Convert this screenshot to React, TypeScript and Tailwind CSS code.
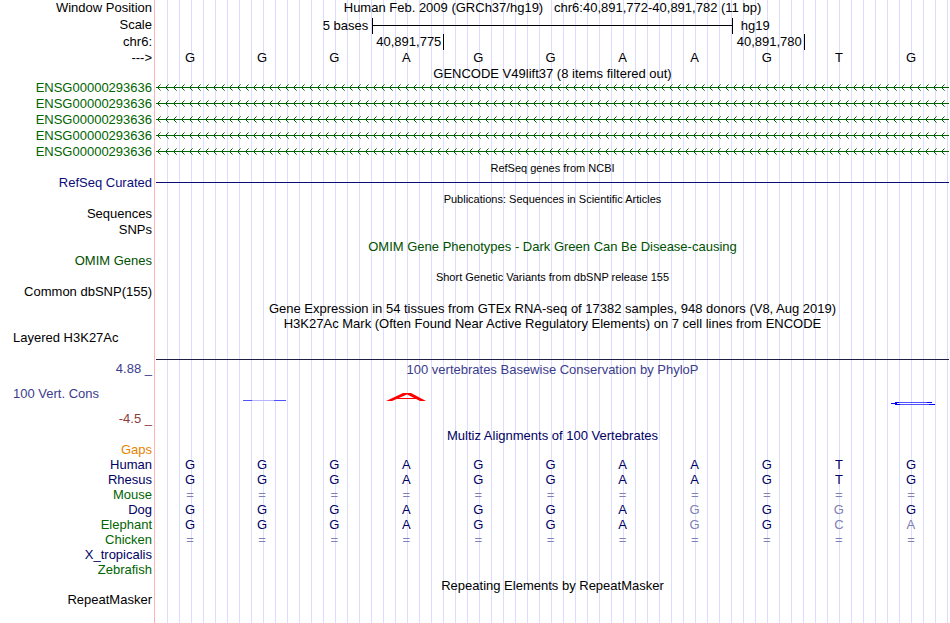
import type { ReactNode } from 'react';

const GENES = ['ENSG00000293636', 'ENSG00000293636', 'ENSG00000293636', 'ENSG00000293636', 'ENSG00000293636'];

const ALIGNMENTS = [
  { species: 'Human', color: 'text-[#000064]', bases: 'GGGAGGAAGTG' },
  { species: 'Rhesus', color: 'text-[#000064]', bases: 'GGGAGGAAGTG' },
  { species: 'Mouse', color: 'text-[#006400]', bases: '===========' },
  { species: 'Dog', color: 'text-[#000064]', bases: 'GGGAGGAGGGG' },
  { species: 'Elephant', color: 'text-[#006400]', bases: 'GGGAGGAGGCA' },
  { species: 'Chicken', color: 'text-[#006400]', bases: '===========' },
  { species: 'X_tropicalis', color: 'text-[#000064]', bases: '' },
  { species: 'Zebrafish', color: 'text-[#006400]', bases: '' },
];

const REFERENCE = 'GGGAGGAAGTG';

type RowProps = {
  label?: ReactNode;
  labelClass?: string;
  className?: string;
  children?: ReactNode;
};

/** One browser line: right-aligned label on the left, track with 12px guide lines on the right. */
function Row({ label, labelClass = '', className = 'h-4', children }: RowProps) {
  return (
    <div className={`flex ${className}`}>
      <div className={`flex w-[154px] shrink-0 items-center justify-end pr-0.5 pb-0.5 ${labelClass}`}>{label}</div>
      <div className="flex min-w-0 flex-1 flex-col justify-center border-l border-[#ffb4b4] bg-[repeating-linear-gradient(to_right,transparent_0_11px,#dcdcff_11px_12px)] bg-origin-content bg-clip-content px-px">
        {children}
      </div>
    </div>
  );
}

function Title({ children, small = false, className = '' }: { children: ReactNode; small?: boolean; className?: string }) {
  return <h2 className={`text-center ${small ? 'pt-0.5 text-[11px]' : ''} ${className}`}>{children}</h2>;
}

function Bases({ bases, aligned = false }: { bases: string; aligned?: boolean }) {
  return (
    <div className="grid grid-cols-11 pb-0.5">
      {bases.split('').map((base, i) => {
        const faded = aligned && base !== REFERENCE[i];
        return (
          <span
            key={i}
            className={['pr-1 text-center', aligned ? (faded ? 'text-[#8080b4]' : 'text-[#000064]') : ''].join(' ')}
          >
            {base}
          </span>
        );
      })}
    </div>
  );
}

function GeneTrack({ id }: { id: string }) {
  return (
    <svg className="block h-4 w-full" shapeRendering="crispEdges" aria-hidden="true">
      <defs>
        <pattern id={id} width="8" height="16" patternUnits="userSpaceOnUse">
          <path d="M0 7h8v1H0zM2 6h1v1H2zM2 8h1v1H2zM3 5h1v1H3zM3 9h1v1H3z" fill="#006400" />
          <path d="M4 4h1v1H4zM4 10h1v1H4z" fill="#66a266" />
        </pattern>
      </defs>
      <rect width="100%" height="16" fill={`url(#${id})`} />
    </svg>
  );
}

function ScaleBar() {
  return (
    <div className="grid grid-cols-11 items-center">
      <span className="col-span-3 pr-1 text-right">5 bases</span>
      <div className="col-span-5 flex h-4 items-center border-x border-black">
        <div className="h-px w-full bg-black" />
      </div>
      <span className="pl-2">hg19</span>
    </div>
  );
}

function Positions() {
  return (
    <div className="grid grid-cols-11">
      <span className="col-span-4 h-4 border-r border-black pr-0.5 text-right">40,891,775</span>
      <span className="col-span-5 h-4 border-r border-black pr-0.5 text-right">40,891,780</span>
    </div>
  );
}

function ConservationMarks() {
  return (
    <div className="grid grid-cols-11">
      <svg className="col-start-2 h-6 w-full" viewBox="0 0 72 24" aria-hidden="true">
        <path d="M15 18.5h43" stroke="#5050ff" />
        <path d="M24 18.5h22" stroke="#b4b4ff" />
      </svg>
      <svg className="col-start-4 h-6 w-full" viewBox="0 0 72 24" aria-hidden="true">
        <path d="M14 19L31 11h8L54 19h-6L35 12.500L20 19z" fill="#f00" />
        <path d="M25 16.500h20" stroke="#f00" />
      </svg>
      <svg className="col-start-11 h-6 w-full" viewBox="0 0 72 24" aria-hidden="true">
        <path d="M20 20.500h34M20 22.500h37" stroke="#5050ff" />
        <path d="M14 21.500h6M18 20.500h4M18 22.500h5M50 20.500h5M52 22.500h6" stroke="#00f" />
      </svg>
    </div>
  );
}

export default function App() {
  return (
    <main className="flex min-h-screen flex-col overflow-hidden bg-white font-['Liberation_Sans',Arial,sans-serif] text-[13px] leading-[15px] whitespace-nowrap text-black">
      <Row label="Window Position" className="h-[17px]">
        <h1 className="pb-0.5 text-center">
          Human Feb. 2009 (GRCh37/hg19) &nbsp; chr6:40,891,772-40,891,782 (11 bp)
        </h1>
      </Row>
      <Row label="Scale" className="h-[17px]">
        <ScaleBar />
      </Row>
      <Row label="chr6:">
        <Positions />
      </Row>
      <Row label="--->">
        <Bases bases={REFERENCE} />
      </Row>

      <Row className="h-[14px]">
        <Title>GENCODE V49lift37 (8 items filtered out)</Title>
      </Row>
      {GENES.map((gene, i) => (
        <Row key={i} label={gene} labelClass="text-[#006400]">
          <GeneTrack id={`gene-${i}`} />
        </Row>
      ))}

      <Row className="h-[15px]">
        <Title small>RefSeq genes from NCBI</Title>
      </Row>
      <Row label="RefSeq Curated" labelClass="text-[#0c0c78]">
        <div className="mb-0.5 h-px bg-[#0c0c78]" />
      </Row>

      <Row className="h-[15px]">
        <Title small>Publications: Sequences in Scientific Articles</Title>
      </Row>
      <Row label="Sequences" />
      <Row label="SNPs" />

      <Row className="h-[15px]">
        <Title className="pt-0.5 text-[#005000]">OMIM Gene Phenotypes - Dark Green Can Be Disease-causing</Title>
      </Row>
      <Row label="OMIM Genes" labelClass="text-[#005000]" />

      <Row className="h-[15px]">
        <Title small>Short Genetic Variants from dbSNP release 155</Title>
      </Row>
      <Row label="Common dbSNP(155)" />

      <Row className="h-[15px]">
        <Title className="pt-0.5">Gene Expression in 54 tissues from GTEx RNA-seq of 17382 samples, 948 donors (V8, Aug 2019)</Title>
      </Row>
      <Row className="h-[15px]">
        <Title className="pt-0.5">H3K27Ac Mark (Often Found Near Active Regulatory Elements) on 7 cell lines from ENCODE</Title>
      </Row>
      <Row label={<span className="w-full pl-[13px]">Layered H3K27Ac</span>} />
      <Row className="h-[14px]">
        <div className="mt-auto h-px bg-[#1e1e46]" />
      </Row>

      <Row label="4.88 _" labelClass="text-[#3c3c8c]" className="h-[18px]">
        <Title className="text-[#3c3c8c]">100 vertebrates Basewise Conservation by PhyloP</Title>
      </Row>
      <Row label={<span className="w-full pl-[13px]">100 Vert. Cons</span>} labelClass="text-[#3c3c8c]" className="h-8">
        <ConservationMarks />
      </Row>
      <Row label="-4.5 _" labelClass="text-[#8c3c3c]" className="h-[18px]" />

      <Row className="h-[15px]">
        <Title className="text-[#000064]">Multiz Alignments of 100 Vertebrates</Title>
      </Row>
      <Row label="Gaps" labelClass="text-[#e68200]" className="h-[15px]" />
      {ALIGNMENTS.map((row) => (
        <Row key={row.species} label={row.species} labelClass={row.color} className="h-[15px]">
          <Bases bases={row.bases} aligned />
        </Row>
      ))}

      <Row className="h-[15px]">
        <Title>Repeating Elements by RepeatMasker</Title>
      </Row>
      <Row label="RepeatMasker" className="h-[15px]" />
      <Row className="flex-1" />
    </main>
  );
}
